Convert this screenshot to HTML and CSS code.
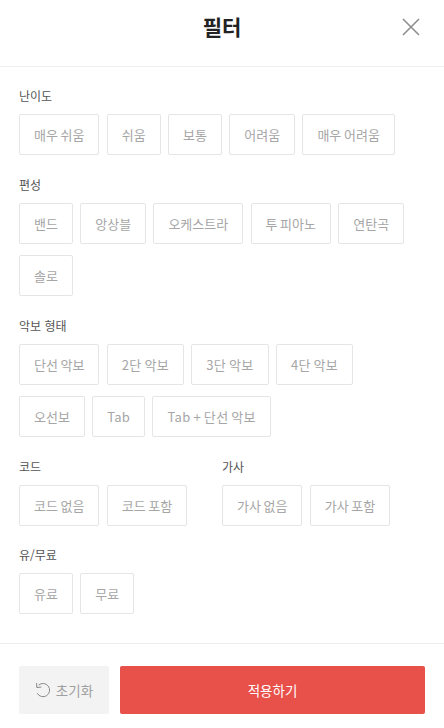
FILE: index.html
```html
<!DOCTYPE html>
<html lang="ko">
<head>
<meta charset="utf-8">
<title>필터</title>
<link rel="stylesheet" href="styles.css">
</head>
<body>
<div class="page">
  <header class="header">
    <h1 class="title">필터</h1>
    <button class="close" aria-label="닫기">
      <svg width="20" height="20" viewBox="0 0 20 20" fill="none" stroke="#8e8e8e" stroke-width="1.6"><path d="M2 2L18 18M18 2L2 18"/></svg>
    </button>
  </header>
  <main class="body">
    <section class="group">
      <h2 class="label">난이도</h2>
      <div class="chips"><span class="chip">매우 쉬움</span><span class="chip">쉬움</span><span class="chip">보통</span><span class="chip">어려움</span><span class="chip">매우 어려움</span></div>
    </section>
    <section class="group">
      <h2 class="label">편성</h2>
      <div class="chips"><span class="chip">밴드</span><span class="chip">앙상블</span><span class="chip">오케스트라</span><span class="chip">투 피아노</span><span class="chip">연탄곡</span><span class="chip">솔로</span></div>
    </section>
    <section class="group">
      <h2 class="label">악보 형태</h2>
      <div class="chips"><span class="chip">단선 악보</span><span class="chip alnum">2단 악보</span><span class="chip alnum">3단 악보</span><span class="chip alnum">4단 악보</span><span class="chip">오선보</span><span class="chip alnum">Tab</span><span class="chip alnum">Tab + 단선 악보</span></div>
    </section>
    <div class="split">
      <section class="group code">
        <h2 class="label">코드</h2>
        <div class="chips"><span class="chip">코드 없음</span><span class="chip">코드 포함</span></div>
      </section>
      <section class="group">
        <h2 class="label">가사</h2>
        <div class="chips"><span class="chip">가사 없음</span><span class="chip">가사 포함</span></div>
      </section>
    </div>
    <section class="group">
      <h2 class="label">유/무료</h2>
      <div class="chips"><span class="chip">유료</span><span class="chip">무료</span></div>
    </section>
  </main>
  <footer class="footer">
    <button class="reset">
      <svg width="16" height="16" viewBox="0 0 16 16" fill="none" stroke="#8a8a8a" stroke-width="1"><path d="M3.6 3.2A6.6 6.6 0 1 1 2.2 11.2"/><path d="M1.6 1L1.8 5.6L6.4 5"/></svg>
      <span>초기화</span>
    </button>
    <button class="apply">적용하기</button>
  </footer>
</div>
</body>
</html>
```
FILE: styles.css
```css
* { box-sizing: border-box; }
html, body { margin: 0; padding: 0; background: #fff; }
body { font-family: "Noto Sans CJK KR", "Noto Sans", sans-serif; }
.page { width: 444px; height: 728px; display: flex; flex-direction: column; overflow: hidden; }
.header { height: 67px; border-bottom: 1px solid #eeeeee; display: flex; align-items: center; justify-content: center; position: relative; padding-bottom: 14px; }
.title { margin: 0; font-size: 21px; line-height: 30px; font-weight: 700; color: #222; }
.close { position: absolute; left: 401px; top: 17px; width: 20px; height: 20px; padding: 0; border: 0; background: none; display: block; }
.close svg { display: block; }
.body { flex: 1; padding: 20px 25px 0 19px; }
.group { margin-bottom: 21px; }
.split .group { margin-bottom: 20px; }
.label { margin: 0 0 9px; font-size: 12px; line-height: 18px; font-weight: 400; color: #555; }
.chips { display: flex; flex-wrap: wrap; gap: 11px 7.3px; }
.chip { height: 41px; padding: 0 14px; border: 1px solid #e5e5e5; border-radius: 2px; display: flex; align-items: center; font-size: 13px; word-spacing: -1px; color: #a6a6a6; white-space: nowrap; }
.alnum { letter-spacing: 0.3px; }
.split { display: flex; }
.code { width: 203px; }
.footer { height: 85px; border-top: 1px solid #eeeeee; padding: 22px 19px 0; display: flex; gap: 11px; align-items: flex-start; }
.reset { width: 90px; height: 48px; border: 0; border-radius: 2px; background: #f3f3f3; color: #a0a0a0; font: inherit; font-size: 13.5px; display: flex; align-items: center; justify-content: center; gap: 5px; padding: 0; }
.reset svg { flex: none; }
.apply { width: 305px; height: 48px; border: 0; border-radius: 2px; background: #e8504a; color: #fff; font: inherit; font-size: 13.5px; padding: 0; }
```
